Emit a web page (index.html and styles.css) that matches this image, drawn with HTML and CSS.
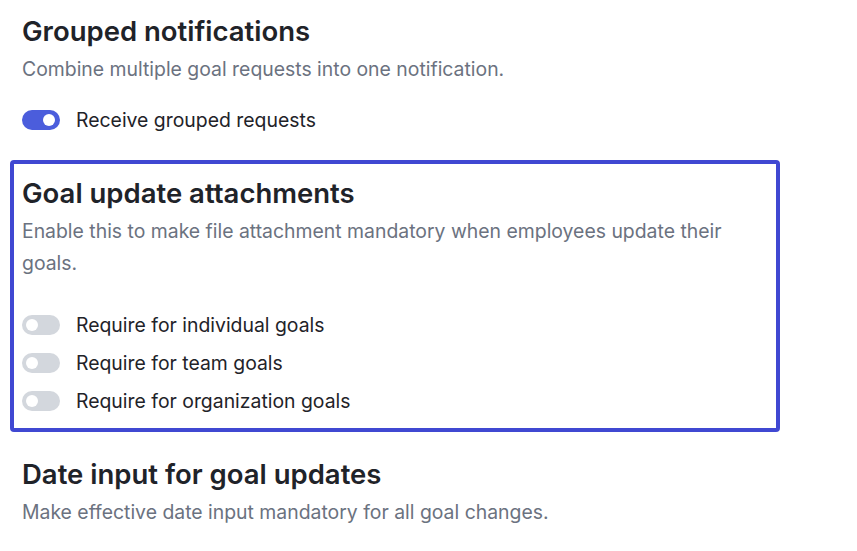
FILE: index.html
```html
<!DOCTYPE html>
<html lang="en">
<head>
<meta charset="utf-8">
<title>Goal settings</title>
<link rel="stylesheet" href="styles.css">
</head>
<body>
<main class="page">
  <section class="section">
    <h2 class="section-title">Grouped notifications</h2>
    <p class="section-desc">Combine multiple goal requests into one notification.</p>
    <div class="options">
      <label class="option">
        <span class="toggle toggle--on"><span class="knob"></span></span>
        <span class="option-label">Receive grouped requests</span>
      </label>
    </div>
  </section>

  <section class="section section--active">
    <h2 class="section-title">Goal update attachments</h2>
    <p class="section-desc">Enable this to make file attachment mandatory when employees update their goals.</p>
    <div class="options options--spaced">
      <label class="option">
        <span class="toggle"><span class="knob"></span></span>
        <span class="option-label">Require for individual goals</span>
      </label>
      <label class="option">
        <span class="toggle"><span class="knob"></span></span>
        <span class="option-label">Require for team goals</span>
      </label>
      <label class="option">
        <span class="toggle"><span class="knob"></span></span>
        <span class="option-label">Require for organization goals</span>
      </label>
    </div>
  </section>

  <section class="section">
    <h2 class="section-title">Date input for goal updates</h2>
    <p class="section-desc">Make effective date input mandatory for all goal changes.</p>
  </section>
</main>
</body>
</html>
```

FILE: styles.css
```css
* { box-sizing: border-box; }

html, body {
  margin: 0;
  background: #ffffff;
}

body {
  font-family: Inter, "Noto Sans", "Liberation Sans", sans-serif;
  color: #1f2329;
}

.page {
  display: flex;
  flex-direction: column;
  gap: 13px;
  padding: 0 0 0 12px;
}

.section {
  width: 766px;
  padding: 15px 10px 10px;
}

.section--active {
  outline: 4px solid #4048d2;
  outline-offset: -2px;
  border-radius: 2px;
}

.section-title {
  margin: 0;
  font-size: 27.5px;
  line-height: 32px;
  font-weight: 600;
  color: #1f2329;
}

.section-desc {
  margin: 6px 0 0;
  font-size: 19.4px;
  line-height: 32px;
  color: #6b7280;
}

.options {
  margin-top: 16px;
  display: flex;
  flex-direction: column;
}

.options--spaced {
  margin-top: 27px;
}

.option {
  display: flex;
  align-items: center;
  gap: 16px;
  height: 38px;
}

.toggle {
  position: relative;
  flex: none;
  width: 38px;
  height: 20px;
  border-radius: 10px;
  background: #d3d7dd;
}

.toggle--on {
  background: #4b5ddc;
}

.knob {
  position: absolute;
  top: 4px;
  left: 4px;
  width: 12px;
  height: 12px;
  border-radius: 50%;
  background: #ffffff;
}

.toggle--on .knob {
  left: auto;
  right: 5px;
}

.option-label {
  font-size: 19.4px;
  line-height: 24px;
  color: #1f2329;
}
```
